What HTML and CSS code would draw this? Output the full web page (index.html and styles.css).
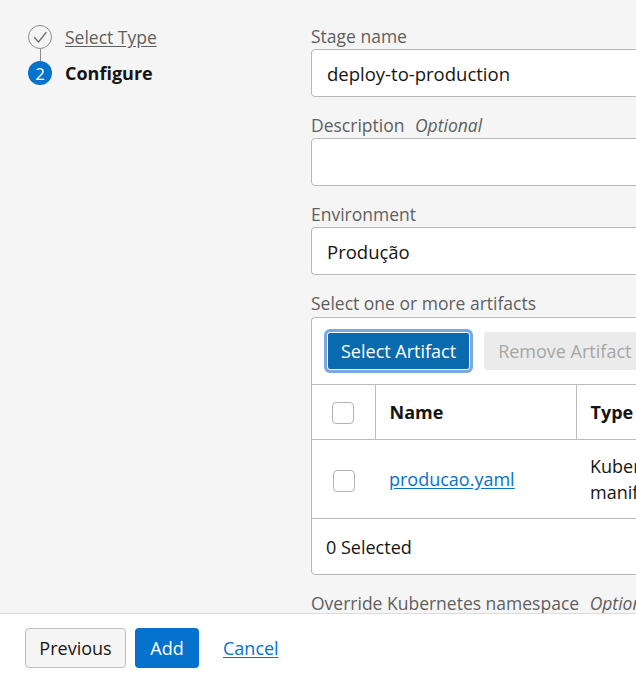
FILE: index.html
```html
<!DOCTYPE html>
<html lang="en">
<head>
<meta charset="utf-8">
<title>Add Stage</title>
<link rel="stylesheet" href="styles.css">
</head>
<body>
<div class="page">
  <nav class="steps">
    <div class="step">
      <span class="dot dot-done">
        <svg width="24" height="24" viewBox="0 0 24 24"><circle cx="12" cy="12" r="11.5" fill="none" stroke="#8c8c8c" stroke-width="1"/><path d="M6.5 12.5 L10.5 17 L18 7.5" fill="none" stroke="#6f6f6f" stroke-width="1.3" stroke-linecap="round" stroke-linejoin="round"/></svg>
      </span>
      <a class="step-link" href="#">Select Type</a>
    </div>
    <div class="connector"></div>
    <div class="step">
      <span class="dot dot-current">2</span>
      <span class="step-current">Configure</span>
    </div>
  </nav>

  <main class="form">
    <div class="field">
      <label class="label">Stage name</label>
      <div class="input">deploy-to-production</div>
    </div>
    <div class="field">
      <label class="label">Description <em class="optional">Optional</em></label>
      <div class="input"></div>
    </div>
    <div class="field">
      <label class="label">Environment</label>
      <div class="input">Produção</div>
    </div>
    <div class="field">
      <label class="label label-tight">Select one or more artifacts</label>
      <div class="table-box">
        <div class="toolbar">
          <button class="btn btn-primary-dark">Select Artifact</button>
          <button class="btn btn-disabled">Remove Artifact</button>
        </div>
        <table class="grid">
          <thead>
            <tr>
              <th class="col-check"><span class="checkbox"></span></th>
              <th class="col-name">Name</th>
              <th class="col-type">Type</th>
            </tr>
          </thead>
          <tbody>
            <tr>
              <td class="col-check"><span class="checkbox"></span></td>
              <td class="col-name"><a class="link" href="#">producao.yaml</a></td>
              <td class="col-type">Kubernetes manifest</td>
            </tr>
          </tbody>
        </table>
        <div class="table-footer">0 Selected</div>
      </div>
    </div>
    <div class="field">
      <label class="label">Override Kubernetes namespace <em class="optional">Optional</em></label>
      <div class="input"></div>
    </div>
  </main>
</div>

<footer class="actions">
  <button class="btn btn-secondary">Previous</button>
  <button class="btn btn-primary">Add</button>
  <a class="cancel" href="#">Cancel</a>
</footer>
</body>
</html>
```

FILE: styles.css
```css
* { box-sizing: border-box; }

html, body {
  margin: 0;
  padding: 0;
  height: 100%;
}

body {
  background: #f5f5f5;
  font-family: "Open Sans", "Noto Sans", sans-serif;
  color: #161513;
  overflow: hidden;
}

.page {
  display: flex;
  align-items: flex-start;
}

.steps {
  width: 311px;
  flex: none;
  padding: 25px 0 0 28px;
  display: flex;
  flex-direction: column;
}

.step {
  display: flex;
  align-items: center;
  gap: 13px;
  height: 24px;
}

.dot {
  width: 24px;
  height: 24px;
  flex: none;
  border-radius: 50%;
  display: flex;
  align-items: center;
  justify-content: center;
}

.dot svg { display: block; }

.dot-current {
  background: #0572ce;
  color: #fff;
  font-size: 17px;
}

.connector {
  width: 1px;
  height: 12px;
  background: #8c8c8c;
  margin-left: 12px;
}

.step-link {
  color: #5f5f5f;
  font-size: 17.5px;
  text-decoration: underline;
  text-underline-offset: 2px;
}

.step-current {
  font-size: 18px;
  font-weight: 700;
  color: #161513;
}

.form {
  width: 540px;
  flex: none;
  padding-top: 26px;
}

.field {
  margin-bottom: 18px;
}

.label {
  display: block;
  font-size: 17.5px;
  line-height: 20px;
  color: #5f5f5f;
  margin-bottom: 3px;
  white-space: nowrap;
}

.label-tight { margin-bottom: 4px; }

.optional {
  font-style: italic;
  margin-left: 6px;
}

.input {
  height: 48px;
  background: #fff;
  border: 1px solid #b8b8b8;
  border-radius: 4px;
  padding: 0 15px;
  display: flex;
  align-items: center;
  font-size: 18.5px;
  color: #161513;
}

.table-box {
  background: #fff;
  border: 1px solid #b8b8b8;
  border-radius: 4px;
}

.toolbar {
  display: flex;
  gap: 14px;
  padding: 14px 15px 14px;
  border-bottom: 1px solid #bcbcbc;
}

.btn {
  height: 38px;
  border-radius: 3px;
  font-family: inherit;
  font-size: 18px;
  padding: 0 13px;
  border: 1px solid transparent;
  cursor: pointer;
  white-space: nowrap;
}

.btn-primary-dark {
  background: #0a6aae;
  color: #fff;
  border-color: #fff;
  box-shadow: 0 0 0 3px #7aa8df;
}

.btn-disabled {
  background: #ebebeb;
  color: #a6a6a6;
}

.grid {
  border-collapse: collapse;
  width: 100%;
  font-size: 18px;
}

.grid th {
  height: 54px;
  text-align: left;
  font-weight: 700;
  padding: 0 14px;
  border-bottom: 1px solid #bcbcbc;
}

.grid th + th { border-left: 1px solid #bcbcbc; }

.grid td {
  height: 79px;
  padding: 0 14px;
  vertical-align: middle;
  line-height: 26px;
}

.col-check { width: 63px; text-align: center !important; padding: 0 !important; }
.col-name { width: 201px; }
.col-type { width: 274px; }
.grid td.col-type { padding-right: 150px; }

.checkbox {
  display: inline-block;
  width: 22px;
  height: 22px;
  border: 1px solid #b3b3b3;
  border-radius: 4px;
  background: #fff;
  vertical-align: middle;
}

.link {
  color: #0572ce;
  text-decoration: underline;
  text-underline-offset: 2px;
}

.table-footer {
  height: 56px;
  border-top: 1px solid #bcbcbc;
  display: flex;
  align-items: center;
  padding: 0 14px;
  font-size: 18px;
}

.actions {
  position: fixed;
  left: 0;
  right: 0;
  bottom: 0;
  height: 62px;
  background: #fff;
  border-top: 1px solid #dcdcdc;
  display: flex;
  align-items: flex-start;
  padding: 14px 0 0 25px;
}

.btn-secondary {
  height: 40px;
  width: 101px;
  padding: 0;
  background: #f5f5f5;
  border: 1px solid #bdbdbd;
  border-radius: 4px;
  color: #161513;
}

.btn-primary {
  height: 40px;
  width: 64px;
  padding: 0;
  background: #0572ce;
  color: #fff;
  border-radius: 4px;
  margin-left: 9px;
}

.cancel {
  margin-left: 24px;
  line-height: 40px;
  font-size: 18px;
  color: #0572ce;
  text-decoration: underline;
  text-underline-offset: 2px;
}
```
